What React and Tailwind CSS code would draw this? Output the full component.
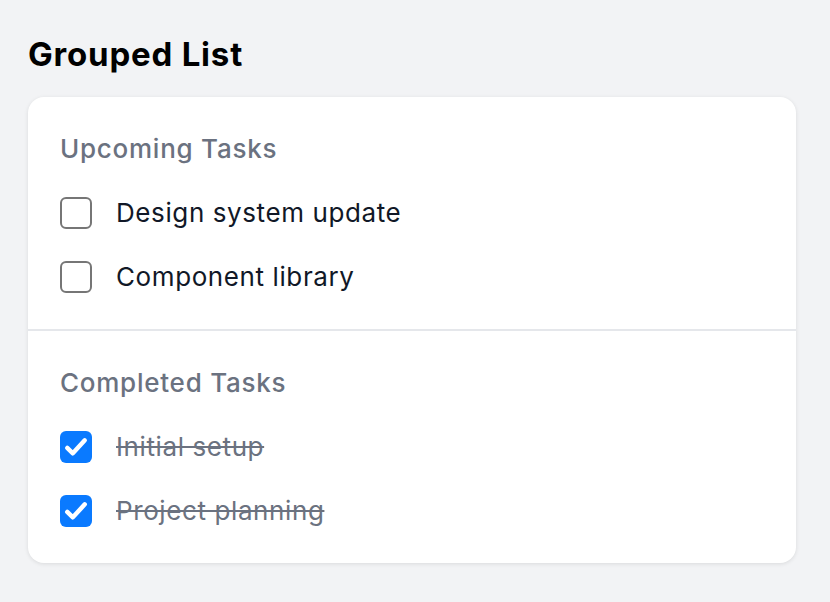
import React from 'react';

const groups = [
  {
    title: 'Upcoming Tasks',
    items: [
      { label: 'Design system update', done: false },
      { label: 'Component library', done: false },
    ],
  },
  {
    title: 'Completed Tasks',
    items: [
      { label: 'Initial setup', done: true },
      { label: 'Project planning', done: true },
    ],
  },
];

const Checkbox = ({ checked }) =>
  checked ? (
    <div className="w-[32px] h-[32px] rounded-[6px] bg-[#0a7aff] flex items-center justify-center shrink-0">
      <svg width="28" height="28" viewBox="0 0 24 24" fill="none">
        <path d="M4.5 12.8l4.8 4.6L19.5 6.3" stroke="white" strokeWidth="3.8" strokeLinecap="round" strokeLinejoin="round" />
      </svg>
    </div>
  ) : (
    <div className="w-[32px] h-[32px] rounded-[6px] border-2 border-[#767676] bg-white shrink-0" />
  );

export default function App() {
  return (
    <div className="min-h-screen bg-[#f2f3f5] px-[28px] pt-[34px] pb-[40px] font-['Inter',sans-serif]">
      <h1 className="text-[33px] leading-[40px] font-bold text-black mb-[23px] tracking-[0.8px]">Grouped List</h1>

      <div className="w-[768px] bg-white rounded-[16px] shadow-[0_1px_4px_rgba(0,0,0,0.1)] overflow-hidden">
        {groups.map((group, gi) => (
          <div
            key={group.title}
            className={`px-[32px] pt-[34px] pb-[28px] ${gi > 0 ? 'border-t-2 border-[#e5e7eb]' : ''}`}
          >
            <div className="text-[26px] leading-[36px] font-medium text-[#6b7280] tracking-[0.75px]">{group.title}</div>
            <div className="mt-[22px] flex flex-col gap-[16px]">
              {group.items.map((item) => (
                <div key={item.label} className="h-[48px] flex items-center gap-[24px]">
                  <Checkbox checked={item.done} />
                  <span
                    className={`text-[26px] leading-[36px] tracking-[0.6px] ${
                      item.done ? 'line-through text-[#6b7280]' : 'text-[#111827]'
                    }`}
                  >
                    {item.label}
                  </span>
                </div>
              ))}
            </div>
          </div>
        ))}
      </div>
    </div>
  );
}
